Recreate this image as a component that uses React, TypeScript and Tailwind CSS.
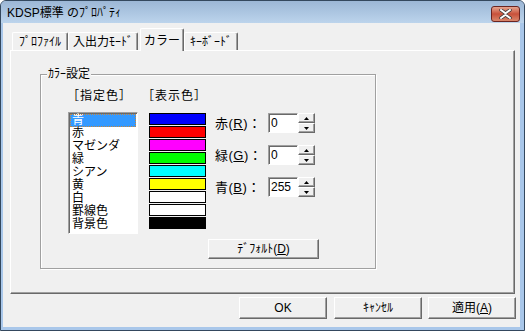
import { ReactNode } from "react";

const raised =
  "border border-t-white border-l-white border-r-[#696969] border-b-[#696969] shadow-[inset_-1px_-1px_0_#a0a0a0]";
const sunken =
  "border border-t-[#a0a0a0] border-l-[#a0a0a0] border-r-white border-b-white shadow-[inset_1px_1px_0_#696969]";

const listItems = ["青", "赤", "マゼンダ", "緑", "シアン", "黄", "白", "罫線色", "背景色"];
const swatches = ["#0000ff", "#ff0000", "#ff00ff", "#00ff00", "#00ffff", "#ffff00", "#ffffff", "#ffffff", "#000000"];

const Button = ({ children, className }: { children: ReactNode; className: string }) => (
  <div className={`flex items-center justify-center bg-[#f0f0f0] text-[12px] leading-none ${raised} ${className}`}>{children}</div>
);

const Tab = ({ label, width, selected }: { label: string; width: string; selected?: boolean }) => (
  <div
    className={`flex items-center justify-center rounded-t-[2px] bg-[#f0f0f0] text-[12px] border-t border-l border-r border-t-white border-l-white border-r-[#696969] shadow-[inset_-1px_0_0_#a0a0a0] ${width} ${
      selected ? "h-[23px] -mb-px relative z-10 pt-[2px]" : "h-[18px]"
    }`}>
    {label}
  </div>
);

const SpinField = ({ label, mnemonic, value }: { label: string; mnemonic: string; value: string }) => (
  <div className="flex items-center h-[20px]">
    <div className="w-[53px] text-[13px] leading-none whitespace-nowrap tracking-[0.5px]">
      {label}(<span className="underline">{mnemonic}</span>)：
    </div>
    <div className={`w-[30px] h-[20px] bg-white text-[12px] leading-[18px] pl-[2px] ${sunken}`}>{value}</div>
    <div className="w-[17px] h-[20px] flex flex-col">
      <div className={`h-[10px] flex items-center justify-center bg-[#f0f0f0] ${raised}`}>
        <svg width="5" height="3" viewBox="0 0 5 3">
          <path d="M2.5 0 L5 3 L0 3 Z" fill="#000" />
        </svg>
      </div>
      <div className={`h-[10px] flex items-center justify-center bg-[#f0f0f0] ${raised}`}>
        <svg width="5" height="3" viewBox="0 0 5 3">
          <path d="M0 0 L5 0 L2.5 3 Z" fill="#000" />
        </svg>
      </div>
    </div>
  </div>
);

export default function App() {
  return (
    <div className="w-[525px] h-[331px] flex flex-col border border-[#34485e] rounded-t-[6px] overflow-hidden bg-[#a9c7ea] text-black font-['Liberation_Sans','Noto_Sans_CJK_JP',sans-serif]">
      {/* title bar */}
      <div className="h-[22px] flex items-center justify-between bg-gradient-to-b from-[#9cb7d6] to-[#bcd4ec] pl-[6px] pr-[4px]">
        <span className="text-[12px] leading-none mt-[2px]">KDSP標準 のﾌﾟﾛﾊﾟﾃｨ</span>
        <div className="w-[29px] h-[16px] mt-[4px] rounded-[3px] border border-[#6a2420] bg-gradient-to-b from-[#e4a48f] via-[#c8503a] to-[#d9866b] flex items-center justify-center">
          <svg width="13" height="10" viewBox="0 0 13 10">
            <path d="M2 1 L6.5 4.2 L11 1 M2 9 L6.5 5.8 L11 9" stroke="#3a3a3a" strokeWidth="3.4" strokeLinecap="round" fill="none" />
            <path d="M2 1 L6.5 4.2 L11 1 M2 9 L6.5 5.8 L11 9" stroke="#fff" strokeWidth="2" strokeLinecap="round" fill="none" />
          </svg>
        </div>
      </div>

      <div className="flex-1 flex pl-[2px] pr-[4px] pb-[3px]">
        <div className="w-[517px] h-[304px] bg-[#f0f0f0] flex flex-col">
          {/* tabs */}
          <div className="flex items-end h-[27px] pt-[5px] ml-[9px]">
            <Tab label="ﾌﾟﾛﾌｧｲﾙ" width="w-[56px]" />
            <Tab label="入出力ﾓｰﾄﾞ" width="w-[70px]" />
            <div className="w-[2px]" />
            <Tab label="カラー" width="w-[44px]" selected />
            <Tab label="ｷｰﾎﾞｰﾄﾞ" width="w-[54px]" />
          </div>

          {/* panel */}
          <div className={`ml-[7px] w-[505px] h-[244px] bg-[#f0f0f0] pl-[29px] pt-[23px] ${raised}`}>
            <div className="relative w-[336px] h-[195px] border border-[#a0a0a0] shadow-[inset_1px_1px_0_#fff,1px_1px_0_#fff] flex flex-col">
              <span className="absolute left-[6px] top-[-8px] px-[1px] bg-[#f0f0f0] text-[12px] leading-[14px]">ｶﾗｰ設定</span>

              <div className="flex mt-[15px] ml-[26px] h-[13px] text-[12px] leading-[13px] tracking-[1px]">
                <span className="w-[75px]">［指定色］</span>
                <span>［表示色］</span>
              </div>

              <div className="flex items-start mt-[9px] ml-[27px]">
                <div className={`w-[70px] h-[122px] bg-white p-[1px] ${sunken}`}>
                  {listItems.map((item, i) => (
                    <div
                      key={item}
                      className={`h-[13px] text-[12px] leading-[13px] pl-[2px] ${
                        i === 0 ? "bg-[#3399ff] text-white outline-1 outline-dotted outline-[#c6863b] -outline-offset-1" : ""
                      }`}>
                      {item}
                    </div>
                  ))}
                </div>

                <div className="ml-[11px] mt-[1px] flex flex-col gap-[1px]">
                  {swatches.map((c, i) => (
                    <div key={i} className="w-[57px] h-[12px] border border-black" style={{ backgroundColor: c }} />
                  ))}
                </div>

                <div className="ml-[9px] mt-[1px] flex flex-col gap-[12px]">
                  <SpinField label="赤" mnemonic="R" value="0" />
                  <SpinField label="緑" mnemonic="G" value="0" />
                  <SpinField label="青" mnemonic="B" value="255" />
                </div>
              </div>

              <Button className="mt-[5px] ml-[167px] w-[111px] h-[20px]">
                ﾃﾞﾌｫﾙﾄ(<span className="underline">D</span>)
              </Button>
            </div>
          </div>

          {/* dialog buttons */}
          <div className="flex mt-[3px] ml-[236px] h-[22px]">
            <Button className="w-[88px] h-[22px]">OK</Button>
            <Button className="w-[88px] h-[22px] ml-[7px]">ｷｬﾝｾﾙ</Button>
            <Button className="w-[88px] h-[22px] ml-[6px]">
              適用(<span className="underline">A</span>)
            </Button>
          </div>
        </div>
      </div>
    </div>
  );
}
